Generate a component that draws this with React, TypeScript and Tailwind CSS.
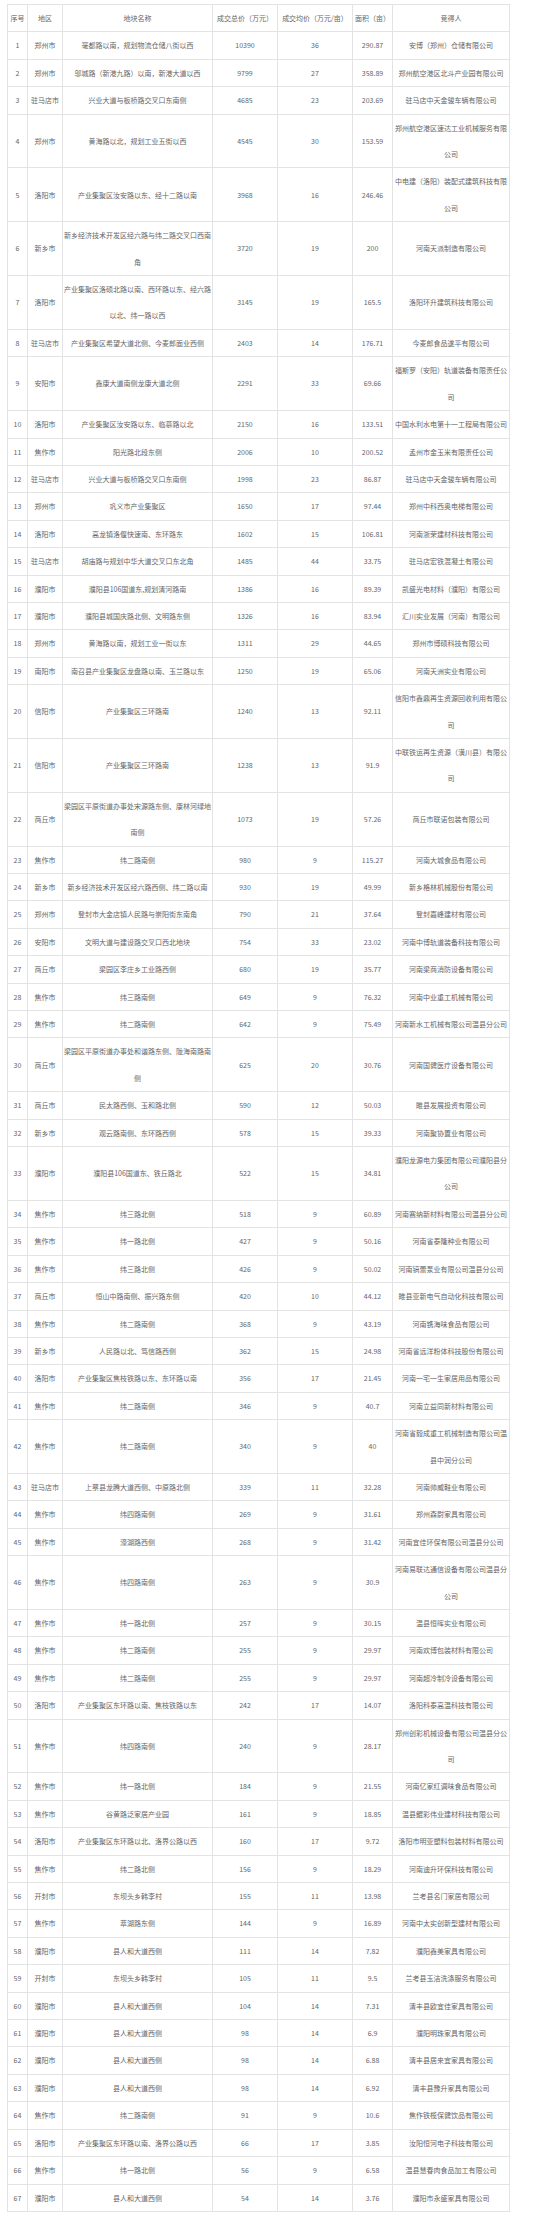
type Row = [number, string, string, string, string, string, string];

const rows: Row[] = [
  [1, "郑州市", "毫都路以南，规划物流仓储八街以西", "10390", "36", "290.87", "安博（郑州）仓储有限公司"],
  [2, "郑州市", "邬城路（新港九路）以南，新港大道以西", "9799", "27", "358.89", "郑州航空港区北斗产业园有限公司"],
  [3, "驻马店市", "兴业大道与板桥路交叉口东南侧", "4685", "23", "203.69", "驻马店中天金骏车辆有限公司"],
  [4, "郑州市", "黄海路以北，规划工业五街以西", "4545", "30", "153.59", "郑州航空港区速达工业机械服务有限公司"],
  [5, "洛阳市", "产业集聚区汝安路以东、经十二路以南", "3968", "16", "246.46", "中电建（洛阳）装配式建筑科技有限公司"],
  [6, "新乡市", "新乡经济技术开发区经六路与纬二路交叉口西南角", "3720", "19", "200", "河南天派制造有限公司"],
  [7, "洛阳市", "产业集聚区洛硕北路以南、西环路以东、经六路以北、纬一路以西", "3145", "19", "165.5", "洛阳环升建筑科技有限公司"],
  [8, "驻马店市", "产业集聚区希望大道北侧、今麦郎面业西侧", "2403", "14", "176.71", "今麦郎食品遂平有限公司"],
  [9, "安阳市", "鑫康大道南侧龙康大道北侧", "2291", "33", "69.66", "福斯罗（安阳）轨道装备有限责任公司"],
  [10, "洛阳市", "产业集聚区汝安路以东、临慕路以北", "2150", "16", "133.51", "中国水利水电第十一工程局有限公司"],
  [11, "焦作市", "阳光路北段东侧", "2006", "10", "200.52", "孟州市金玉米有限责任公司"],
  [12, "驻马店市", "兴业大道与板桥路交叉口东南侧", "1998", "23", "86.87", "驻马店中天金骏车辆有限公司"],
  [13, "郑州市", "巩义市产业集聚区", "1650", "17", "97.44", "郑州中科西奥电梯有限公司"],
  [14, "洛阳市", "高龙镇洛偃快速南、东环路东", "1602", "15", "106.81", "河南浙荣建材科技有限公司"],
  [15, "驻马店市", "胡庙路与规划中华大道交叉口东北角", "1485", "44", "33.75", "驻马店宏铁混凝土有限公司"],
  [16, "濮阳市", "濮阳县106国道东,规划清河路南", "1386", "16", "89.39", "凯盛光电材料（濮阳）有限公司"],
  [17, "濮阳市", "濮阳县城国庆路北侧、文明路东侧", "1326", "16", "83.94", "汇川实业发展（河南）有限公司"],
  [18, "郑州市", "黄海路以南，规划工业一街以东", "1311", "29", "44.65", "郑州市博硕科技有限公司"],
  [19, "南阳市", "南召县产业集聚区龙盘路以南、玉兰路以东", "1250", "19", "65.06", "河南天洲实业有限公司"],
  [20, "信阳市", "产业集聚区三环路南", "1240", "13", "92.11", "信阳市鑫鼎再生资源回收利用有限公司"],
  [21, "信阳市", "产业集聚区三环路南", "1238", "13", "91.9", "中联铁运再生资源（潢川县）有限公司"],
  [22, "商丘市", "梁园区平原街道办事处宋源路东侧、康林河绿地南侧", "1073", "19", "57.26", "商丘市联诺包装有限公司"],
  [23, "焦作市", "纬二路南侧", "980", "9", "115.27", "河南大城食品有限公司"],
  [24, "新乡市", "新乡经济技术开发区经六路西侧、纬二路以南", "930", "19", "49.99", "新乡格林机械股份有限公司"],
  [25, "郑州市", "登封市大金店镇人民路与崇阳街东南角", "790", "21", "37.64", "登封嘉峰建材有限公司"],
  [26, "安阳市", "文明大道与建设路交叉口西北地块", "754", "33", "23.02", "河南中博轨道装备科技有限公司"],
  [27, "商丘市", "梁园区李庄乡工业路西侧", "680", "19", "35.77", "河南梁商消防设备有限公司"],
  [28, "焦作市", "纬三路南侧", "649", "9", "76.32", "河南中业重工机械有限公司"],
  [29, "焦作市", "纬二路南侧", "642", "9", "75.49", "河南新水工机械有限公司温县分公司"],
  [30, "商丘市", "梁园区平原街道办事处和谐路东侧、陇海南路南侧", "625", "20", "30.76", "河南国健医疗设备有限公司"],
  [31, "商丘市", "民太路西侧、玉和路北侧", "590", "12", "50.03", "睢县发展投资有限公司"],
  [32, "新乡市", "观云路南侧、东环路西侧", "578", "15", "39.33", "河南聚协置业有限公司"],
  [33, "濮阳市", "濮阳县106国道东、铁丘路北", "522", "15", "34.81", "濮阳龙源电力集团有限公司濮阳县分公司"],
  [34, "焦作市", "纬三路北侧", "518", "9", "60.89", "河南赛纳新材料有限公司温县分公司"],
  [35, "焦作市", "纬一路北侧", "427", "9", "50.16", "河南省泰隆种业有限公司"],
  [36, "焦作市", "纬三路北侧", "426", "9", "50.02", "河南镐蕾泵业有限公司温县分公司"],
  [37, "商丘市", "恒山中路南侧、振兴路东侧", "420", "10", "44.12", "睢县亚新电气自动化科技有限公司"],
  [38, "焦作市", "纬二路南侧", "368", "9", "43.19", "河南镌海味食品有限公司"],
  [39, "新乡市", "人民路以北、笃信路西侧", "362", "15", "24.98", "河南省远洋粉体科技股份有限公司"],
  [40, "洛阳市", "产业集聚区焦枝铁路以东、东环路以南", "356", "17", "21.45", "河南一宅一生家居用品有限公司"],
  [41, "焦作市", "纬二路南侧", "346", "9", "40.7", "河南立益同新材料有限公司"],
  [42, "焦作市", "纬二路南侧", "340", "9", "40", "河南省毅成重工机械制造有限公司温县中润分公司"],
  [43, "驻马店市", "上蔡县龙腾大道西侧、中原路北侧", "339", "11", "32.28", "河南帅威鞋业有限公司"],
  [44, "焦作市", "纬四路南侧", "269", "9", "31.61", "郑州森尉家具有限公司"],
  [45, "焦作市", "濠湖路西侧", "268", "9", "31.42", "河南宜佳环保有限公司温县分公司"],
  [46, "焦作市", "纬四路南侧", "263", "9", "30.9", "河南易联达通信设备有限公司温县分公司"],
  [47, "焦作市", "纬一路北侧", "257", "9", "30.15", "温县恒晖实业有限公司"],
  [48, "焦作市", "纬二路南侧", "255", "9", "29.97", "河南欢博包装材料有限公司"],
  [49, "焦作市", "纬二路南侧", "255", "9", "29.97", "河南超冷制冷设备有限公司"],
  [50, "洛阳市", "产业集聚区东环路以南、焦枝铁路以东", "242", "17", "14.07", "洛阳科泰高温科技有限公司"],
  [51, "焦作市", "纬四路南侧", "240", "9", "28.17", "郑州创彩机械设备有限公司温县分公司"],
  [52, "焦作市", "纬一路北侧", "184", "9", "21.55", "河南亿家红调味食品有限公司"],
  [53, "焦作市", "谷黄路泛家居产业园", "161", "9", "18.85", "温县鲲彩伟业建材科技有限公司"],
  [54, "洛阳市", "产业集聚区东环路以北、洛界公路以西", "160", "17", "9.72", "洛阳市明亚塑料包装材料有限公司"],
  [55, "焦作市", "纬二路北侧", "156", "9", "18.29", "河南迪升环保科技有限公司"],
  [56, "开封市", "东坝头乡韩李村", "155", "11", "13.98", "兰考县名门家居有限公司"],
  [57, "焦作市", "萃湖路东侧", "144", "9", "16.89", "河南中太实创新型建材有限公司"],
  [58, "濮阳市", "县人和大道西侧", "111", "14", "7.82", "濮阳鑫美家具有限公司"],
  [59, "开封市", "东坝头乡韩李村", "105", "11", "9.5", "兰考县玉洁洗涤服务有限公司"],
  [60, "濮阳市", "县人和大道西侧", "104", "14", "7.31", "清丰县欧宜佳家具有限公司"],
  [61, "濮阳市", "县人和大道西侧", "98", "14", "6.9", "濮阳明珠家具有限公司"],
  [62, "濮阳市", "县人和大道西侧", "98", "14", "6.88", "清丰县居来宜家具有限公司"],
  [63, "濮阳市", "县人和大道西侧", "98", "14", "6.92", "清丰县豫升家具有限公司"],
  [64, "焦作市", "纬二路南侧", "91", "9", "10.6", "焦作铁榄保健饮品有限公司"],
  [65, "洛阳市", "产业集聚区东环路以南、洛界公路以西", "66", "17", "3.85", "汝阳恒河电子科技有限公司"],
  [66, "焦作市", "纬一路北侧", "56", "9", "6.58", "温县慧春肉食品加工有限公司"],
  [67, "濮阳市", "县人和大道西侧", "54", "14", "3.76", "濮阳市永盛家具有限公司"],
];

const headers = ["序号", "地区", "地块名称", "成交总价（万元）", "成交均价（万元/亩）", "面积（亩）", "竞得人"];

const cell = "border border-[#e3e3e3] p-0 text-center align-middle";

export default function App() {
  return (
    <div className="min-h-[2215px] bg-white pl-[7px] pt-[4px] font-['Noto_Sans_CJK_SC','Noto_Sans',sans-serif] text-[7px] leading-[26.4px] text-[#666]">
      <table className="w-[502px] table-fixed border-collapse">
        <colgroup>
          <col className="w-[20px]" />
          <col className="w-[35px]" />
          <col className="w-[150px]" />
          <col className="w-[65px]" />
          <col className="w-[75px]" />
          <col className="w-[40px]" />
          <col className="w-[117px]" />
        </colgroup>
        <thead>
          <tr>
            {headers.map((h) => (
              <th key={h} className={`${cell} font-normal`}>
                {h}
              </th>
            ))}
          </tr>
        </thead>
        <tbody>
          {rows.map((r) => (
            <tr key={r[0]}>
              {r.map((v, i) => (
                <td key={i} className={cell}>
                  {v}
                </td>
              ))}
            </tr>
          ))}
        </tbody>
      </table>
    </div>
  );
}
